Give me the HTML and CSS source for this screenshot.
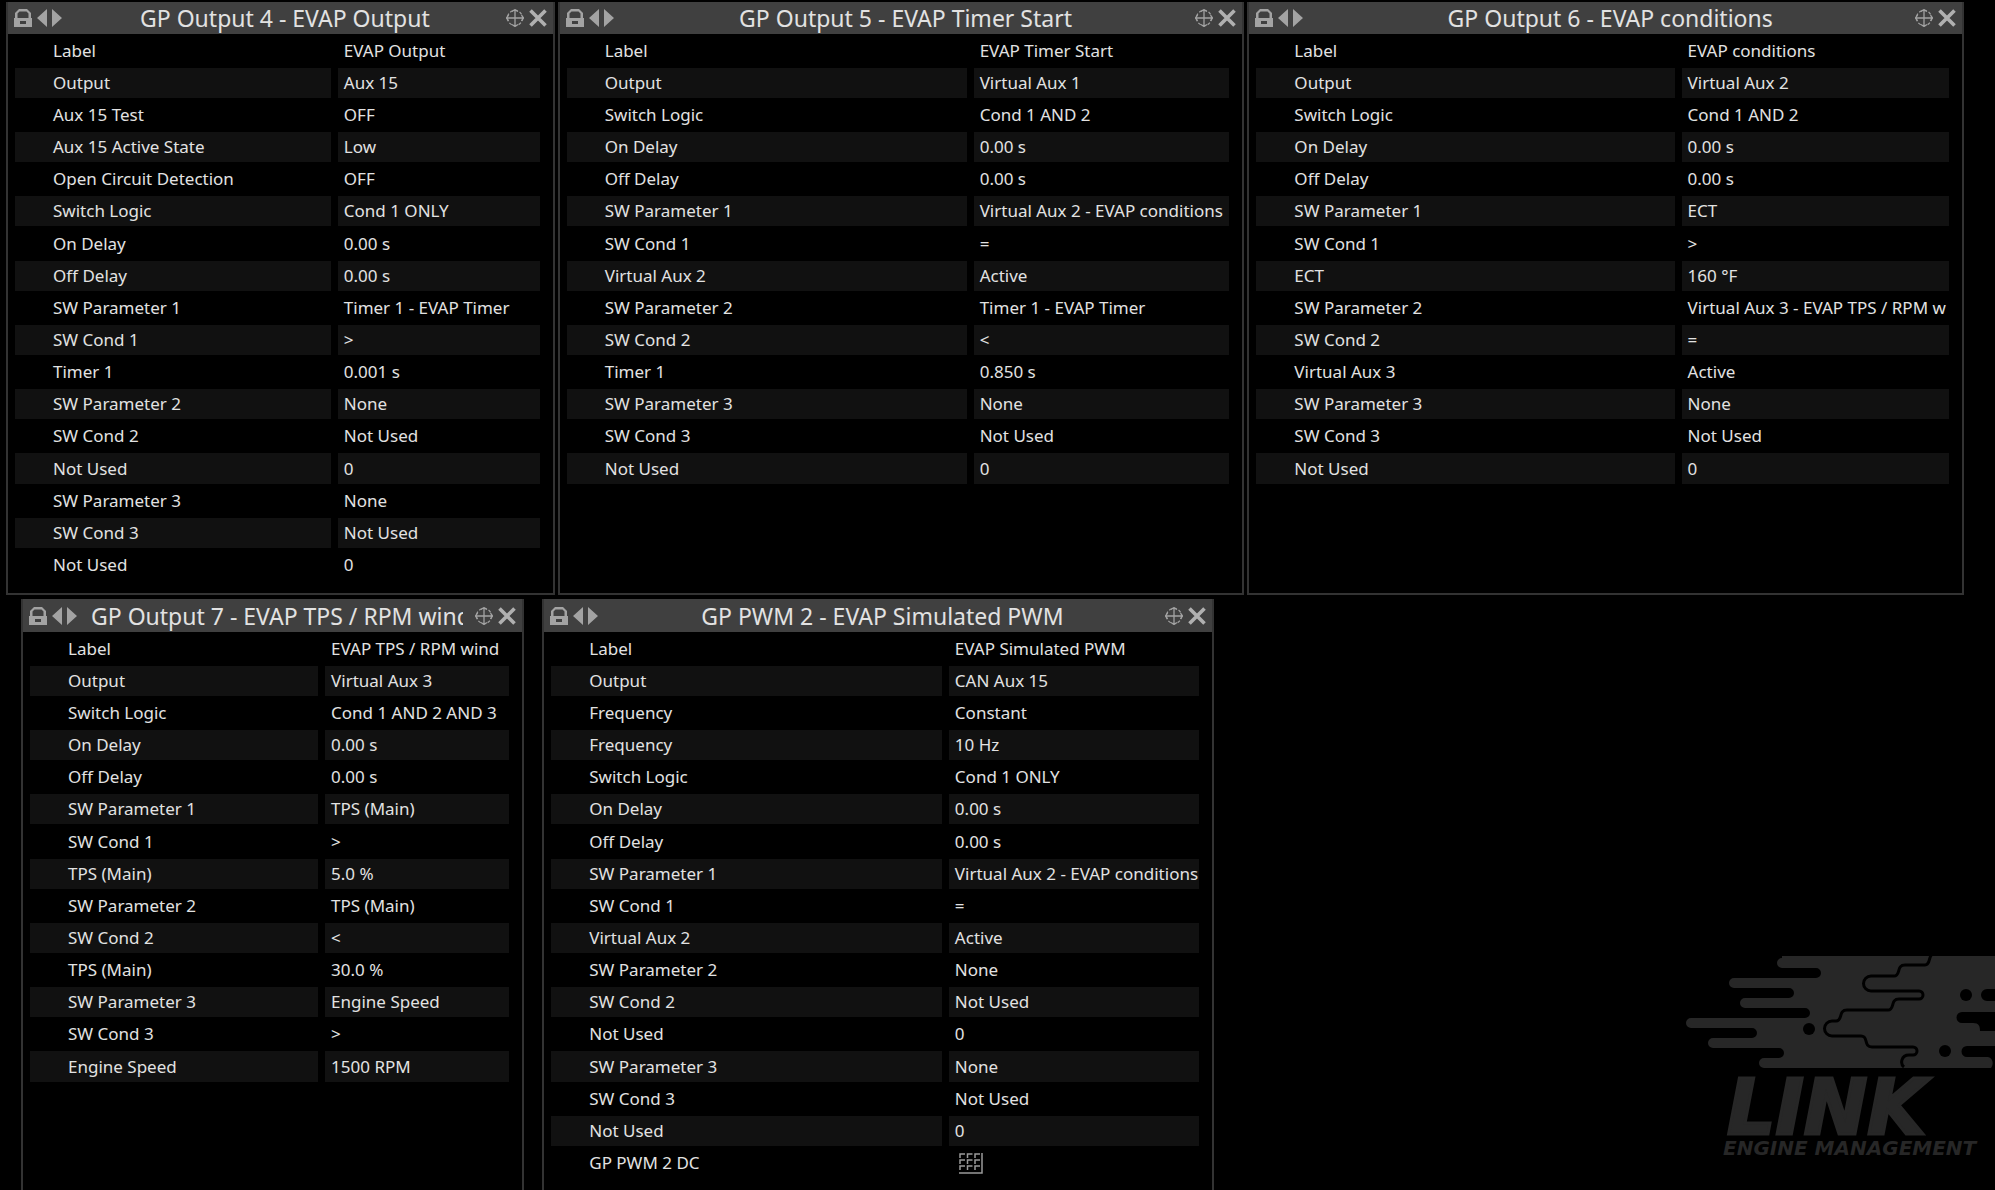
FILE: index.html
```html
<!DOCTYPE html>
<html lang="en">
<head>
    <meta charset="UTF-8">
    <meta name="viewport" content="width=device-width, initial-scale=1.0">
    <title>GP Outputs</title>
    <link rel="stylesheet" href="styles.css">
</head>
<body>
    <!-- Shared icons -->
    <svg class="sprite" aria-hidden="true">
        <symbol id="lock" viewBox="0 0 18 18">
            <path fill-rule="evenodd" d="M5 0h8l4 4v5h1v9H0V9h1V4zM5.500 2.500L3.500 4.500V9h11V4.500l-2-2zM6 12v3h6v-3z"/>
        </symbol>
        <symbol id="arrows" viewBox="0 0 25 18">
            <path d="M10 0v18L0 9zM15 0v18l10-9z"/>
        </symbol>
        <symbol id="move" viewBox="0 0 18 18">
            <path d="M9 0v18M0 9h18M6 2.500L9 .5l3 2M6 15.500l3 2 3-2M2.500 6L.5 9l2 3M15.500 6l2 3-2 3" fill="none" stroke="#a3a3a3" stroke-width="1.300"/>
            <circle cx="9" cy="9" r="7.500" fill="none" stroke="#a3a3a3" stroke-width="1.200" stroke-dasharray="3 2"/>
        </symbol>
        <symbol id="close" viewBox="0 0 18 18">
            <path d="M1.500 1.500l15 15M16.500 1.500l-15 15" fill="none" stroke="#b0b0b0" stroke-width="3.600"/>
        </symbol>
    </svg>

    <main class="desktop">
        <div class="row row-top">
            <section class="panel">
                <header class="bar">
                    <button class="icon" aria-label="Lock"><svg width="18" height="18"><use href="#lock"/></svg></button>
                    <button class="icon" aria-label="Previous or next"><svg width="25" height="18"><use href="#arrows"/></svg></button>
                    <h2>GP Output 4 - EVAP Output</h2>
                    <button class="icon" aria-label="Move"><svg width="18" height="18"><use href="#move"/></svg></button>
                    <button class="icon" aria-label="Close"><svg width="18" height="18"><use href="#close"/></svg></button>
                </header>
                <table>
                    <tr><th scope="row">Label</th><td>EVAP Output</td></tr>
                    <tr><th scope="row">Output</th><td>Aux 15</td></tr>
                    <tr><th scope="row">Aux 15 Test</th><td>OFF</td></tr>
                    <tr><th scope="row">Aux 15 Active State</th><td>Low</td></tr>
                    <tr><th scope="row">Open Circuit Detection</th><td>OFF</td></tr>
                    <tr><th scope="row">Switch Logic</th><td>Cond 1 ONLY</td></tr>
                    <tr><th scope="row">On Delay</th><td>0.00 s</td></tr>
                    <tr><th scope="row">Off Delay</th><td>0.00 s</td></tr>
                    <tr><th scope="row">SW Parameter 1</th><td>Timer 1 - EVAP Timer</td></tr>
                    <tr><th scope="row">SW Cond 1</th><td>&gt;</td></tr>
                    <tr><th scope="row">Timer 1</th><td>0.001 s</td></tr>
                    <tr><th scope="row">SW Parameter 2</th><td>None</td></tr>
                    <tr><th scope="row">SW Cond 2</th><td>Not Used</td></tr>
                    <tr><th scope="row">Not Used</th><td>0</td></tr>
                    <tr><th scope="row">SW Parameter 3</th><td>None</td></tr>
                    <tr><th scope="row">SW Cond 3</th><td>Not Used</td></tr>
                    <tr><th scope="row">Not Used</th><td>0</td></tr>
                </table>
            </section>

            <section class="panel">
                <header class="bar">
                    <button class="icon" aria-label="Lock"><svg width="18" height="18"><use href="#lock"/></svg></button>
                    <button class="icon" aria-label="Previous or next"><svg width="25" height="18"><use href="#arrows"/></svg></button>
                    <h2>GP Output 5 - EVAP Timer Start</h2>
                    <button class="icon" aria-label="Move"><svg width="18" height="18"><use href="#move"/></svg></button>
                    <button class="icon" aria-label="Close"><svg width="18" height="18"><use href="#close"/></svg></button>
                </header>
                <table>
                    <tr><th scope="row">Label</th><td>EVAP Timer Start</td></tr>
                    <tr><th scope="row">Output</th><td>Virtual Aux 1</td></tr>
                    <tr><th scope="row">Switch Logic</th><td>Cond 1 AND 2</td></tr>
                    <tr><th scope="row">On Delay</th><td>0.00 s</td></tr>
                    <tr><th scope="row">Off Delay</th><td>0.00 s</td></tr>
                    <tr><th scope="row">SW Parameter 1</th><td>Virtual Aux 2 - EVAP conditions</td></tr>
                    <tr><th scope="row">SW Cond 1</th><td>=</td></tr>
                    <tr><th scope="row">Virtual Aux 2</th><td>Active</td></tr>
                    <tr><th scope="row">SW Parameter 2</th><td>Timer 1 - EVAP Timer</td></tr>
                    <tr><th scope="row">SW Cond 2</th><td>&lt;</td></tr>
                    <tr><th scope="row">Timer 1</th><td>0.850 s</td></tr>
                    <tr><th scope="row">SW Parameter 3</th><td>None</td></tr>
                    <tr><th scope="row">SW Cond 3</th><td>Not Used</td></tr>
                    <tr><th scope="row">Not Used</th><td>0</td></tr>
                </table>
            </section>

            <section class="panel">
                <header class="bar">
                    <button class="icon" aria-label="Lock"><svg width="18" height="18"><use href="#lock"/></svg></button>
                    <button class="icon" aria-label="Previous or next"><svg width="25" height="18"><use href="#arrows"/></svg></button>
                    <h2>GP Output 6 - EVAP conditions</h2>
                    <button class="icon" aria-label="Move"><svg width="18" height="18"><use href="#move"/></svg></button>
                    <button class="icon" aria-label="Close"><svg width="18" height="18"><use href="#close"/></svg></button>
                </header>
                <table>
                    <tr><th scope="row">Label</th><td>EVAP conditions</td></tr>
                    <tr><th scope="row">Output</th><td>Virtual Aux 2</td></tr>
                    <tr><th scope="row">Switch Logic</th><td>Cond 1 AND 2</td></tr>
                    <tr><th scope="row">On Delay</th><td>0.00 s</td></tr>
                    <tr><th scope="row">Off Delay</th><td>0.00 s</td></tr>
                    <tr><th scope="row">SW Parameter 1</th><td>ECT</td></tr>
                    <tr><th scope="row">SW Cond 1</th><td>&gt;</td></tr>
                    <tr><th scope="row">ECT</th><td>160 °F</td></tr>
                    <tr><th scope="row">SW Parameter 2</th><td>Virtual Aux 3 - EVAP TPS / RPM w</td></tr>
                    <tr><th scope="row">SW Cond 2</th><td>=</td></tr>
                    <tr><th scope="row">Virtual Aux 3</th><td>Active</td></tr>
                    <tr><th scope="row">SW Parameter 3</th><td>None</td></tr>
                    <tr><th scope="row">SW Cond 3</th><td>Not Used</td></tr>
                    <tr><th scope="row">Not Used</th><td>0</td></tr>
                </table>
            </section>
        </div>

        <div class="row row-bottom">
            <section class="panel">
                <header class="bar">
                    <button class="icon" aria-label="Lock"><svg width="18" height="18"><use href="#lock"/></svg></button>
                    <button class="icon" aria-label="Previous or next"><svg width="25" height="18"><use href="#arrows"/></svg></button>
                    <h2>GP Output 7 - EVAP TPS / RPM wind</h2>
                    <button class="icon" aria-label="Move"><svg width="18" height="18"><use href="#move"/></svg></button>
                    <button class="icon" aria-label="Close"><svg width="18" height="18"><use href="#close"/></svg></button>
                </header>
                <table>
                    <tr><th scope="row">Label</th><td>EVAP TPS / RPM wind</td></tr>
                    <tr><th scope="row">Output</th><td>Virtual Aux 3</td></tr>
                    <tr><th scope="row">Switch Logic</th><td>Cond 1 AND 2 AND 3</td></tr>
                    <tr><th scope="row">On Delay</th><td>0.00 s</td></tr>
                    <tr><th scope="row">Off Delay</th><td>0.00 s</td></tr>
                    <tr><th scope="row">SW Parameter 1</th><td>TPS (Main)</td></tr>
                    <tr><th scope="row">SW Cond 1</th><td>&gt;</td></tr>
                    <tr><th scope="row">TPS (Main)</th><td>5.0 %</td></tr>
                    <tr><th scope="row">SW Parameter 2</th><td>TPS (Main)</td></tr>
                    <tr><th scope="row">SW Cond 2</th><td>&lt;</td></tr>
                    <tr><th scope="row">TPS (Main)</th><td>30.0 %</td></tr>
                    <tr><th scope="row">SW Parameter 3</th><td>Engine Speed</td></tr>
                    <tr><th scope="row">SW Cond 3</th><td>&gt;</td></tr>
                    <tr><th scope="row">Engine Speed</th><td>1500 RPM</td></tr>
                </table>
            </section>

            <section class="panel">
                <header class="bar">
                    <button class="icon" aria-label="Lock"><svg width="18" height="18"><use href="#lock"/></svg></button>
                    <button class="icon" aria-label="Previous or next"><svg width="25" height="18"><use href="#arrows"/></svg></button>
                    <h2>GP PWM 2 - EVAP Simulated PWM</h2>
                    <button class="icon" aria-label="Move"><svg width="18" height="18"><use href="#move"/></svg></button>
                    <button class="icon" aria-label="Close"><svg width="18" height="18"><use href="#close"/></svg></button>
                </header>
                <table>
                    <tr><th scope="row">Label</th><td>EVAP Simulated PWM</td></tr>
                    <tr><th scope="row">Output</th><td>CAN Aux 15</td></tr>
                    <tr><th scope="row">Frequency</th><td>Constant</td></tr>
                    <tr><th scope="row">Frequency</th><td>10 Hz</td></tr>
                    <tr><th scope="row">Switch Logic</th><td>Cond 1 ONLY</td></tr>
                    <tr><th scope="row">On Delay</th><td>0.00 s</td></tr>
                    <tr><th scope="row">Off Delay</th><td>0.00 s</td></tr>
                    <tr><th scope="row">SW Parameter 1</th><td>Virtual Aux 2 - EVAP conditions</td></tr>
                    <tr><th scope="row">SW Cond 1</th><td>=</td></tr>
                    <tr><th scope="row">Virtual Aux 2</th><td>Active</td></tr>
                    <tr><th scope="row">SW Parameter 2</th><td>None</td></tr>
                    <tr><th scope="row">SW Cond 2</th><td>Not Used</td></tr>
                    <tr><th scope="row">Not Used</th><td>0</td></tr>
                    <tr><th scope="row">SW Parameter 3</th><td>None</td></tr>
                    <tr><th scope="row">SW Cond 3</th><td>Not Used</td></tr>
                    <tr><th scope="row">Not Used</th><td>0</td></tr>
                    <tr><th scope="row">GP PWM 2 DC</th><td>
                        <button class="icon grid-btn" aria-label="Open table"><svg width="24" height="21" viewBox="0 0 24 21">
                            <path d="M1 5V1h5M8.500 5V1h5M16 5V1h5M1 11V7h5M8.500 11V7h5M16 11V7h5M1 17v-4h5M8.500 17v-4h5M16 17v-4h5M23 0v20H0" fill="none" stroke="#999" stroke-width="1.500"/>
                        </svg></button>
                    </td></tr>
                </table>
            </section>

            <!-- Link logo -->
            <svg class="logo" width="310" height="202" viewBox="0 0 310 202" role="img" aria-label="Link Engine Management">
                <g transform="translate(-4 0)">
                    <path d="M101 0H314V112H83a5 5 0 0 1 0-10H98a5 5 0 0 0 0-10H32a5 5 0 0 1 0-10H71a5 5 0 0 0 0-10H10a5 5 0 0 1 0-10H124a5 5 0 0 0 0-10H64a5 5 0 0 1 0-10H108a5 5 0 0 0 0-10H53a5 5 0 0 1 0-10H135a5 5 0 0 0 0-10H101a5 5 0 0 1 0-10z"/>
                    <path class="seam" d="M252 -2c-5 1-2 11-8 11H224c-9 0-4 11-11 11H190a7 7 0 0 0 0 15H238a4 4 0 0 1 0 8H218c-9 0-4 11-11 11H166c-9 0-4 11-11 11H151a7 7 0 0 0 0 15H180c8 0 2 11 11 11H232a4 4 0 0 1 0 8H228c-8 0-9 9-5 12"/>
                    <g class="hole">
                        <circle cx="128" cy="73" r="6"/>
                        <circle cx="285" cy="39" r="6"/>
                        <circle cx="264" cy="95" r="6"/>
                        <path d="M314 33h-8a6 6 0 0 0 0 12h8zM314 56H281a5 5 0 0 0 0 11H292c6 0 7 3 7 8h15zM314 90H286a5 5 0 0 0 0 11H307c5 1 6 7 3 11h4z"/>
                    </g>
                </g>
                <text class="logo-name" x="42" y="178">LINK</text>
                <text class="logo-sub" x="38" y="199">ENGINE MANAGEMENT</text>
            </svg>
        </div>
    </main>
</body>
</html>
```
FILE: styles.css
```css
* {
    box-sizing: border-box;
}

body {
    margin: 0;
    height: 100vh;
    overflow: hidden;
    background: #000;
    color: #e2e2e2;
    font-family: "Noto Sans", "Segoe UI", sans-serif;
    font-size: 17px;
}

.sprite {
    display: none;
}

.desktop {
    display: flex;
    flex-direction: column;
    height: 100vh;
    padding: 2px 0 0 6px;
    gap: 4px;
}

.row {
    display: grid;
}

.row-top {
    grid-template-columns: 549fr 687fr 717fr;
    gap: 3px;
    padding-right: 31px;
}

.row-bottom {
    flex: 1;
    min-height: 0;
    grid-template-columns: 503fr 671fr 763fr;
    column-gap: 18px;
    padding-left: 15px;
}

/* Panels */
.panel {
    min-width: 0;
    border: 2px solid #333;
    border-top: 0;
    padding-bottom: 11px;
}

.row-bottom .panel {
    border-bottom: 0;
    padding-bottom: 0;
}

.bar {
    display: flex;
    align-items: center;
    height: 32px;
    padding: 0 6px;
    gap: 5px;
    background: #404040;
}

.row-bottom .bar {
    height: 33px;
}

.bar h2 {
    flex: 1;
    display: flex;
    justify-content: safe center;
    margin: 0 7px 0 9px;
    overflow: hidden;
    white-space: nowrap;
    font-size: 23px;
    line-height: 32px;
    font-weight: 400;
}

.icon {
    display: flex;
    padding: 0;
    border: 0;
    background: none;
    fill: #a3a3a3;
    cursor: pointer;
}

.grid-btn {
    margin-left: 4px;
}

/* Parameter tables */
table {
    width: 100%;
    table-layout: fixed;
    border-collapse: separate;
    border-spacing: 7px 2px;
    padding-right: 6px;
}

th,
td {
    height: 30px;
    padding: 0;
    overflow: hidden;
    white-space: nowrap;
    text-align: left;
    font-weight: 400;
    line-height: 30px;
}

th {
    width: 61%;
    padding-left: 38px;
}

td {
    padding-left: 6px;
}

tr:nth-child(even) > * {
    background: #111;
}

tr:nth-child(7n) > * {
    height: 31px;
}

/* Logo */
.logo {
    place-self: end;
    margin-bottom: 32px;
    fill: #272727;
}

.seam {
    fill: none;
    stroke: #000;
    stroke-width: 3;
}

.hole {
    fill: #000;
}

.logo-name,
.logo-sub {
    font-family: "DejaVu Sans", sans-serif;
    font-weight: 700;
    font-style: italic;
}

.logo-name {
    font-size: 76px;
    stroke: #272727;
    stroke-width: 3;
}

.logo-sub {
    font-size: 20px;
}
```
